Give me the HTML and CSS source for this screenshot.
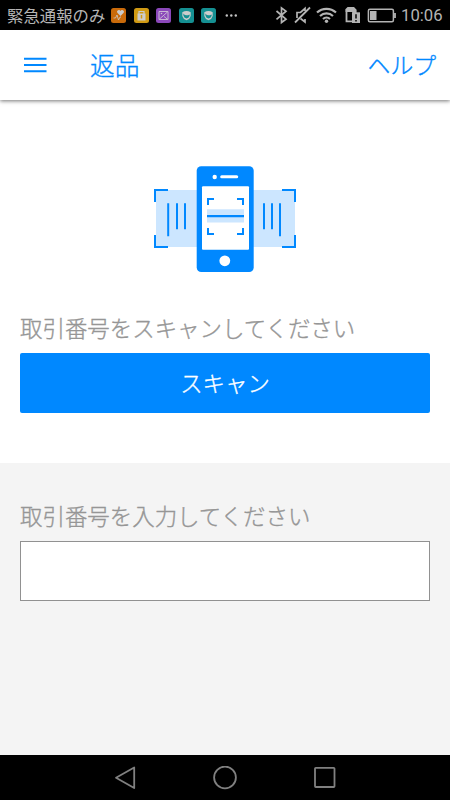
FILE: index.html
```html
<!DOCTYPE html>
<html lang="ja">
<head>
<meta charset="utf-8">
<title>返品</title>
<link rel="stylesheet" href="styles.css">
</head>
<body>
<div class="screen">
  <div class="status">
    <span class="carrier">緊急通報のみ</span>
    <div class="notices">
      <svg class="notice" viewBox="0 0 15 15"><rect width="15" height="15" rx="2.5" fill="#c96a0a"/><path d="M9.5 8 6.3 4.8A1.8 1.8 0 0 1 9.5 3a1.8 1.8 0 0 1 3.2 1.8z" fill="#ccc"/><path d="M2.5 10h2l1.5-3 1.5 5 1.5-3h1" fill="none" stroke="#ccc" stroke-width=".8"/></svg>
      <svg class="notice" viewBox="0 0 15 15"><rect width="15" height="15" rx="2.5" fill="#d09a14"/><path d="M5 6V3.5h5V6" fill="none" stroke="#ccc" stroke-width="1.2"/><rect x="3.5" y="5.5" width="8" height="7" fill="#ccc"/><path d="M7.5 7v3.5" stroke="#d09a14" stroke-width="1.5"/></svg>
      <svg class="notice" viewBox="0 0 15 15"><rect width="15" height="15" rx="2.5" fill="#8b48ba"/><path d="M3 3.5h9v8H3zM3.3 11.2l8.4-7.4M8 8.5l3.5 2.7" fill="none" stroke="#c9b8d4" stroke-width="1"/><circle cx="5.5" cy="5.5" r=".8" fill="#ccc"/></svg>
      <svg class="notice" viewBox="0 0 15 15"><rect width="15" height="15" rx="2.5" fill="#159092"/><path d="M3.3 4.2Q7.5 1.8 11.7 4.2V8Q11 11 7.5 12.3 4 11 3.3 8z" fill="#ccc"/><path d="M4.4 5.5Q6.5 8.7 10.6 6.4V8Q9.8 10 7.5 10.6 4.8 9.8 4.4 7.5z" fill="#159092"/></svg>
      <svg class="notice" viewBox="0 0 15 15"><rect width="15" height="15" rx="2.5" fill="#159092"/><path d="M3.3 4.2Q7.5 1.8 11.7 4.2V8Q11 11 7.5 12.3 4 11 3.3 8z" fill="#ccc"/><path d="M4.4 5.5Q6.5 8.7 10.6 6.4V8Q9.8 10 7.5 10.6 4.8 9.8 4.4 7.5z" fill="#159092"/></svg>
      <svg class="dots" viewBox="0 0 13 3"><g fill="#c4c4c4"><circle cx="1.8" cy="1.5" r="1.2"/><circle cx="6.3" cy="1.5" r="1.2"/><circle cx="10.8" cy="1.5" r="1.2"/></g></svg>
    </div>
    <svg class="system" viewBox="0 0 125 30" fill="none" stroke="#b4b4b4" stroke-width="1.7">
      <path d="M1.5 11l9.5 8.2-4.5 3.3V7.9l4.5 3.3-9.5 8.2"/>
      <path d="M30 19v3l-4.5-3.5M22 18v-5.5h3.5L30 8.5V11"/><path d="M20 22.5 35 7.5" stroke-width="1.8"/>
      <path d="M42 12.5a14 14 0 0 1 19 0M45 16a9.6 9.6 0 0 1 13 0M48 19a5.2 5.2 0 0 1 7 0" stroke-width="2.2"/><circle cx="51.5" cy="21.3" r="1.7" fill="#b4b4b4" stroke="none"/>
      <path d="M77.5 21.3h-6V9" stroke-width="1.8"/><path d="M70.6 12V9l2-2H79l2.6 2.8V13h-4.2v-1z" fill="#b4b4b4" stroke="none"/><rect x="77" y="12.3" width="8" height="10.7" fill="#b4b4b4" stroke="none"/><path d="M81 14.3v4.2M81 20v1.5" stroke="#000" stroke-width="1.5"/>
      <rect x="93.4" y="9.2" width="25" height="12.6" rx="1.5" stroke-width="1.5"/><path d="M120 13v5" stroke-width="1.8"/><rect x="95" y="11" width="6.5" height="9" fill="#b4b4b4" stroke="none"/>
    </svg>
    <span class="clock">10:06</span>
  </div>
  <header class="bar">
    <svg class="menu" viewBox="0 0 24 18"><path d="M0 2.7h22.5M0 9h22.5M0 15.3h22.5" stroke="#0088ff" stroke-width="2.1"/></svg>
    <h1>返品</h1>
    <a class="help">ヘルプ</a>
  </header>
  <main class="scan">
    <svg class="art" viewBox="0 0 144 108">
      <path d="M3 25h139v57H3z" fill="#cce6ff"/>
      <path d="M2 37V25h13M129 25h13v12M2 70v12h13M129 82h13V70" fill="none" stroke="#0088ff" stroke-width="2"/>
      <path d="M15.2 38.3v33M24 38.3v26M32 38.3v26M111 38.3v26M119 38.3v26M127 38.3v33" stroke="#0088ff" stroke-width="2"/>
      <rect x="43.7" y="1.3" width="57" height="105.8" rx="4.5" fill="#0088ff"/>
      <rect x="49" y="21.3" width="47" height="63.5" rx="1" fill="#fff"/>
      <circle cx="61.7" cy="12" r="2.2" fill="#fff"/><path d="M68.7 11.8h15" stroke="#fff" stroke-width="3" stroke-linecap="round"/><circle cx="71.8" cy="95.8" r="5.4" fill="#fff"/>
      <path d="M54 44.2h37v13.3H54z" fill="#cce6ff"/><path d="M54 51.2h37" stroke="#0088ff" stroke-width="2.3"/>
      <path d="M55 40v-6h6M84 34h6v6M55 63v6h6M84 69h6v-6" fill="none" stroke="#0088ff" stroke-width="2"/>
    </svg>
    <p class="label">取引番号をスキャンしてください</p>
    <button class="action">スキャン</button>
  </main>
  <section class="entry">
    <label class="label" for="number">取引番号を入力してください</label>
    <input id="number" class="field" type="text">
  </section>
  <nav class="nav">
    <svg viewBox="0 0 24 24"><path d="M21.2 1.5v20.5L3 11.7z"/></svg>
    <svg viewBox="0 0 24 24"><circle cx="12" cy="11.5" r="10.9"/></svg>
    <svg viewBox="0 0 24 24"><rect x="2" y="1.8" width="19.5" height="19.2" rx=".8"/></svg>
  </nav>
</div>
</body>
</html>
```

FILE: styles.css
```css
* { box-sizing: border-box; }
body { margin: 0; font-family: "Noto Sans CJK JP", sans-serif; }
.screen { width: 450px; height: 800px; display: flex; flex-direction: column; overflow: hidden; background: #fff; }
.status { height: 30px; flex: none; display: flex; align-items: center; padding: 0 7px; background: #000; color: #b4b4b4; }
.carrier { width: 104px; font-size: 16.4px; line-height: 30px; white-space: nowrap; font-weight: 400; }
.notices { display: flex; align-items: center; gap: 7.5px; flex: 1; }
.notice { width: 15px; height: 15px; }
.dots { width: 13px; height: 3px; margin-left: 1px; }
.system { width: 125px; height: 30px; flex: none; }
.clock { width: 42px; margin-left: 1px; font: 16.7px/30px Roboto, sans-serif; padding-top: 1px; }
.bar { height: 70px; flex: none; display: flex; align-items: center; padding: 0 14px 0 24px; color: #0088ff; background: #fff; box-shadow: 0 1px 4px rgba(0, 0, 0, .55); z-index: 1; }
.menu { width: 24px; height: 18px; }
.bar h1, .help, .label, .action { font-weight: 300; -webkit-text-stroke: .35px currentColor; }
.bar h1 { margin: 0 0 0 42px; flex: 1; font-size: 24.7px; line-height: 68px; height: 70px; }
.help { font-size: 22.8px; line-height: 70px; height: 70px; }
.scan { height: 363px; flex: none; padding: 65px 20px 0; display: flex; flex-direction: column; }
.art { width: 144px; height: 108px; margin-left: 133px; }
.label { display: block; margin: 0; font-size: 22.45px; line-height: 32px; height: 34px; color: #969696; white-space: nowrap; }
.scan .label { margin: 38px 0 8px; }
.action { height: 60px; flex: none; padding: 0 0 2px; border: 0; border-radius: 2px; background: #0088ff; color: #fff; font: 300 22.4px/58px "Noto Sans CJK JP", sans-serif; }
.entry { flex: 1; background: #f4f4f4; padding: 36px 20px 0; }
.field { display: block; width: 100%; height: 60px; margin-top: 8px; border: 1px solid #919191; border-radius: 0; background: #fff; padding: 0 12px; font: inherit; font-size: 22px; }
.nav { height: 45px; flex: none; display: flex; justify-content: center; align-items: center; gap: 76px; background: #000; }
.nav svg { width: 24px; height: 24px; fill: none; stroke: #808080; stroke-width: 1.8; stroke-linejoin: round; }
```
